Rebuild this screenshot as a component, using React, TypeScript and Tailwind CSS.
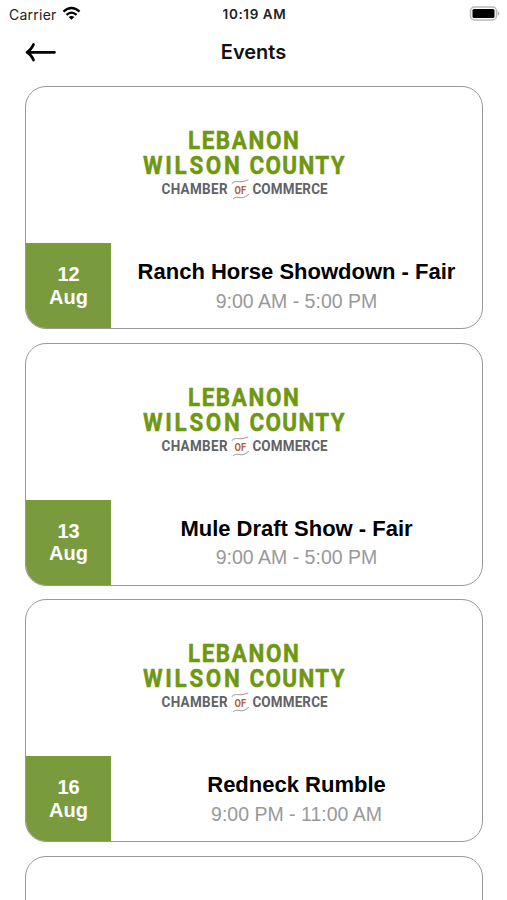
interface EventItem {
  day: string;
  month: string;
  title: string;
  time: string;
}

const events: EventItem[] = [
  { day: "12", month: "Aug", title: "Ranch Horse Showdown - Fair", time: "9:00 AM - 5:00 PM" },
  { day: "13", month: "Aug", title: "Mule Draft Show - Fair", time: "9:00 AM - 5:00 PM" },
  { day: "16", month: "Aug", title: "Redneck Rumble", time: "9:00 PM - 11:00 AM" },
];

function ChamberLogo() {
  return (
    <svg
      viewBox="0 0 216 80"
      className="h-[80px] w-[216px] font-['Roboto',sans-serif] font-bold"
      aria-label="Lebanon Wilson County Chamber of Commerce"
    >
      <g
        fill="#6f970f"
        stroke="#6f970f"
        strokeWidth="0.5"
        strokeLinejoin="round"
        fontSize="25.5"
        transform="scale(0.88 1)"
      >
        <text x="59" y="24.2" textLength="126" lengthAdjust="spacing">LEBANON</text>
        <text x="8" y="49.4" textLength="110" lengthAdjust="spacing">WILSON</text>
        <text x="129" y="49.4" textLength="108" lengthAdjust="spacing">COUNTY</text>
      </g>
      <g fill="#626267" fontSize="15.3" transform="scale(0.88 1)">
        <text x="29" y="69.500" textLength="75" lengthAdjust="spacing">CHAMBER</text>
        <text x="132.300" y="69.500" textLength="85.5" lengthAdjust="spacing">COMMERCE</text>
      </g>
      <text x="98.5" y="68.500" fill="#b0603a" fontSize="11.5" textLength="11.5" lengthAdjust="spacingAndGlyphs">OF</text>
      <g fill="none" stroke="#8d8781" strokeWidth="0.9" strokeLinecap="round">
        <path d="M96 58.5c3-3.500 6-1.500 9-1.800 3 0 5-1.200 7-1.700" />
        <path d="M97.500 73.500c3-2.500 6-.5 8-.7 3-.2 5-2 7-3.300" />
      </g>
    </svg>
  );
}

function EventCard({ event }: { event: EventItem }) {
  return (
    <article className="flex h-[243px] shrink-0 flex-col overflow-hidden rounded-[21px] border border-[#999999] bg-white">
      <div className="flex h-[156px] shrink-0 pl-[110px] pt-[38px]">
        <ChamberLogo />
      </div>
      <div className="flex flex-1 font-['Liberation_Sans',Arial,sans-serif]">
        <div className="flex w-[85px] flex-col items-center justify-center bg-[#799a3d] text-[20px] font-bold leading-[22.5px] text-white">
          <span>{event.day}</span>
          <span>{event.month}</span>
        </div>
        <div className="flex flex-1 flex-col items-center pt-[16px]">
          <h2 className="whitespace-nowrap text-[22px] font-bold leading-[26px] text-black">{event.title}</h2>
          <p className="mt-[3.5px] whitespace-nowrap text-[19.5px] leading-[24px] text-[#999999]">{event.time}</p>
        </div>
      </div>
    </article>
  );
}

function StatusBar() {
  return (
    <div className="grid h-[27px] shrink-0 grid-cols-3 items-center pl-[9px] pr-[7px] font-['Inter',sans-serif] text-[13.5px] text-[#222]">
      <div className="flex items-center gap-[5px]">
        <span className="pt-[1px] text-[14px] tracking-[0.25px]">Carrier</span>
        <svg viewBox="0 0 20 15" className="h-[15px] w-[19px]" fill="none" stroke="#000" strokeWidth="2.4">
          <path d="M1.500 5.500Q10-2 18.500 5.500" />
          <path d="M4.700 8.900Q10 4.300 15.300 8.900" />
          <path d="M7 11.100Q10 8.900 13 11.100L10 14Z" fill="#000" stroke="none" />
        </svg>
      </div>
      <span className="pt-[1px] text-center font-semibold tracking-[0.6px]">10:19 AM</span>
      <svg viewBox="0 0 31 15" className="h-[15px] w-[31px] justify-self-end">
        <rect x="1.500" y="1" width="26" height="13" rx="4" fill="#fff" stroke="#b8b8b8" strokeWidth="1.500" />
        <rect x="3.500" y="3" width="22" height="9" rx="1.500" fill="#000" />
        <path d="M28.800 5.200Q32 7.500 28.800 9.800Z" fill="#aaa" />
      </svg>
    </div>
  );
}

export default function App() {
  return (
    <main className="flex h-[900px] w-[507px] flex-col overflow-hidden bg-white">
      <StatusBar />
      <header className="grid h-[59px] shrink-0 grid-cols-[1fr_auto_1fr] items-start px-[25px]">
        <button aria-label="Back" className="mt-[15px] w-[32px]">
          <svg
            viewBox="0 0 32 20"
            className="h-[20px] w-[32px]"
            fill="none"
            stroke="#000"
            strokeWidth="2.700"
            strokeLinecap="round"
            strokeLinejoin="round"
          >
            <path d="M2 10.300H29.500M8.500 2.500Q6 8 2 10.300Q6 12.500 8.500 18" />
          </svg>
        </button>
        <h1 className="pt-[12px] font-['Inter',sans-serif] text-[20px] font-semibold leading-[26px] text-[#111]">
          Events
        </h1>
      </header>
      <section className="flex flex-col gap-[13.500px] pl-[25px] pr-[24px]">
        {events.map((event) => (
          <EventCard key={event.day} event={event} />
        ))}
        <article className="h-[243px] shrink-0 rounded-[21px] border border-[#999999] bg-white" />
      </section>
    </main>
  );
}
